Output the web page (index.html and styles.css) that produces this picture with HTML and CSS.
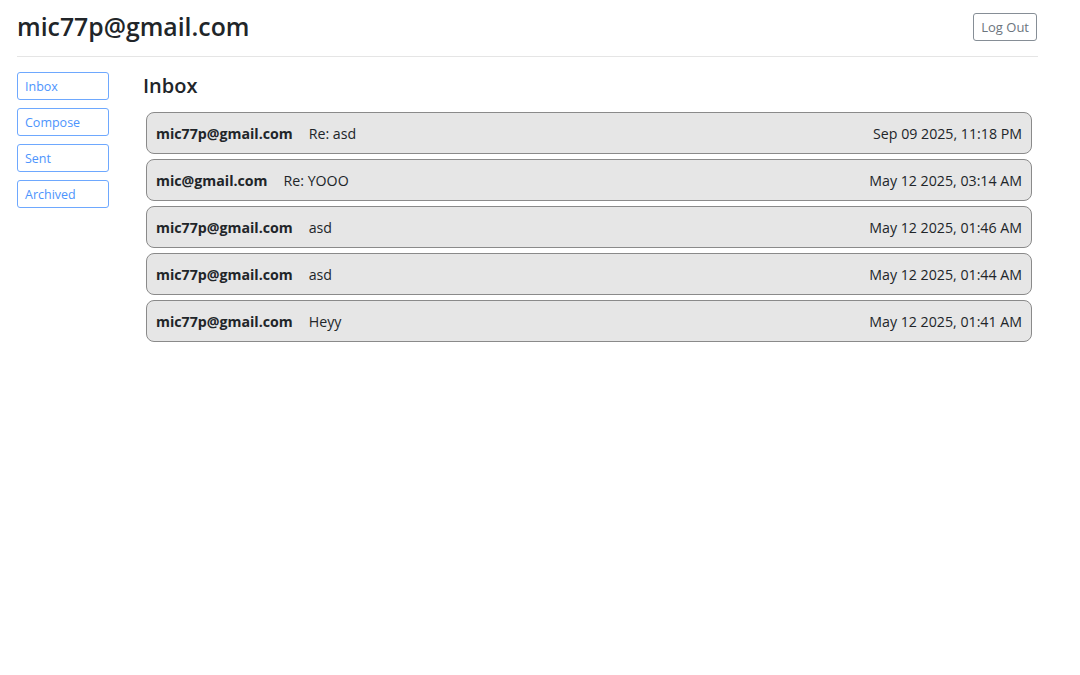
FILE: index.html
```html
<!DOCTYPE html>
<html lang="en">
<head>
    <meta charset="UTF-8">
    <meta name="viewport" content="width=device-width, initial-scale=1.0">
    <title>Mail</title>
    <link rel="stylesheet" href="styles.css">
</head>
<body>

<div class="container">
    <header class="top-bar">
        <h2 class="user-email">mic77p@gmail.com</h2>
        <button class="btn-logout">Log Out</button>
    </header>

    <div class="layout">
        <nav class="sidebar">
            <button class="nav-btn">Inbox</button>
            <button class="nav-btn">Compose</button>
            <button class="nav-btn">Sent</button>
            <button class="nav-btn">Archived</button>
        </nav>

        <main class="mailbox">
            <h3 class="mailbox-title">Inbox</h3>
            <div class="email-list">
                <div class="email-row">
                    <span class="sender">mic77p@gmail.com</span>
                    <span class="subject">Re: asd</span>
                    <span class="timestamp">Sep 09 2025, 11:18 PM</span>
                </div>
                <div class="email-row">
                    <span class="sender">mic@gmail.com</span>
                    <span class="subject">Re: YOOO</span>
                    <span class="timestamp">May 12 2025, 03:14 AM</span>
                </div>
                <div class="email-row">
                    <span class="sender">mic77p@gmail.com</span>
                    <span class="subject">asd</span>
                    <span class="timestamp">May 12 2025, 01:46 AM</span>
                </div>
                <div class="email-row">
                    <span class="sender">mic77p@gmail.com</span>
                    <span class="subject">asd</span>
                    <span class="timestamp">May 12 2025, 01:44 AM</span>
                </div>
                <div class="email-row">
                    <span class="sender">mic77p@gmail.com</span>
                    <span class="subject">Heyy</span>
                    <span class="timestamp">May 12 2025, 01:41 AM</span>
                </div>
            </div>
        </main>
    </div>
</div>

</body>
</html>
```

FILE: styles.css
```css
body {
    font-family: 'Open Sans', 'Noto Sans', sans-serif;
    margin: 0;
    padding: 0;
    background-color: #fff;
    color: #212529;
}
.container {
    width: 1021px;
    padding: 0 17px;
}
.top-bar {
    display: flex;
    justify-content: space-between;
    align-items: center;
    height: 56px;
    border-bottom: 1px solid #e5e5e5;
}
.user-email {
    margin: -5px 0 0;
    font-size: 24.8px;
    font-weight: 600;
}
.btn-logout {
    font-family: inherit;
    font-size: 13px;
    color: #6c757d;
    background: #fff;
    border: 1px solid #868e96;
    border-radius: 3px;
    padding: 4px 7px;
    margin-right: 1px;
    margin-top: -3px;
}
.layout {
    display: flex;
    padding-top: 15px;
}
.sidebar {
    display: flex;
    flex-direction: column;
    gap: 8px;
    width: 92px;
    flex-shrink: 0;
}
.nav-btn {
    font-family: inherit;
    font-size: 12.5px;
    color: #4d94fd;
    background: #fff;
    border: 1px solid #6ea8fe;
    border-radius: 3px;
    height: 28px;
    text-align: left;
    padding: 0 7px;
}
.mailbox {
    flex: 1;
    margin-left: 34px;
}
.mailbox-title {
    margin: 0 0 12px;
    font-size: 20px;
    font-weight: 600;
    line-height: 28px;
}
.email-list {
    display: flex;
    flex-direction: column;
    gap: 5px;
    margin-left: 3px;
    margin-right: 6px;
}
.email-row {
    display: flex;
    align-items: center;
    height: 40px;
    padding: 0 9px;
    background-color: #e6e6e6;
    border: 1px solid #8a8a8a;
    border-radius: 8px;
    font-size: 14.2px;
}
.sender {
    font-weight: 700;
    margin-right: 16px;
}
.timestamp {
    margin-left: auto;
}
```
